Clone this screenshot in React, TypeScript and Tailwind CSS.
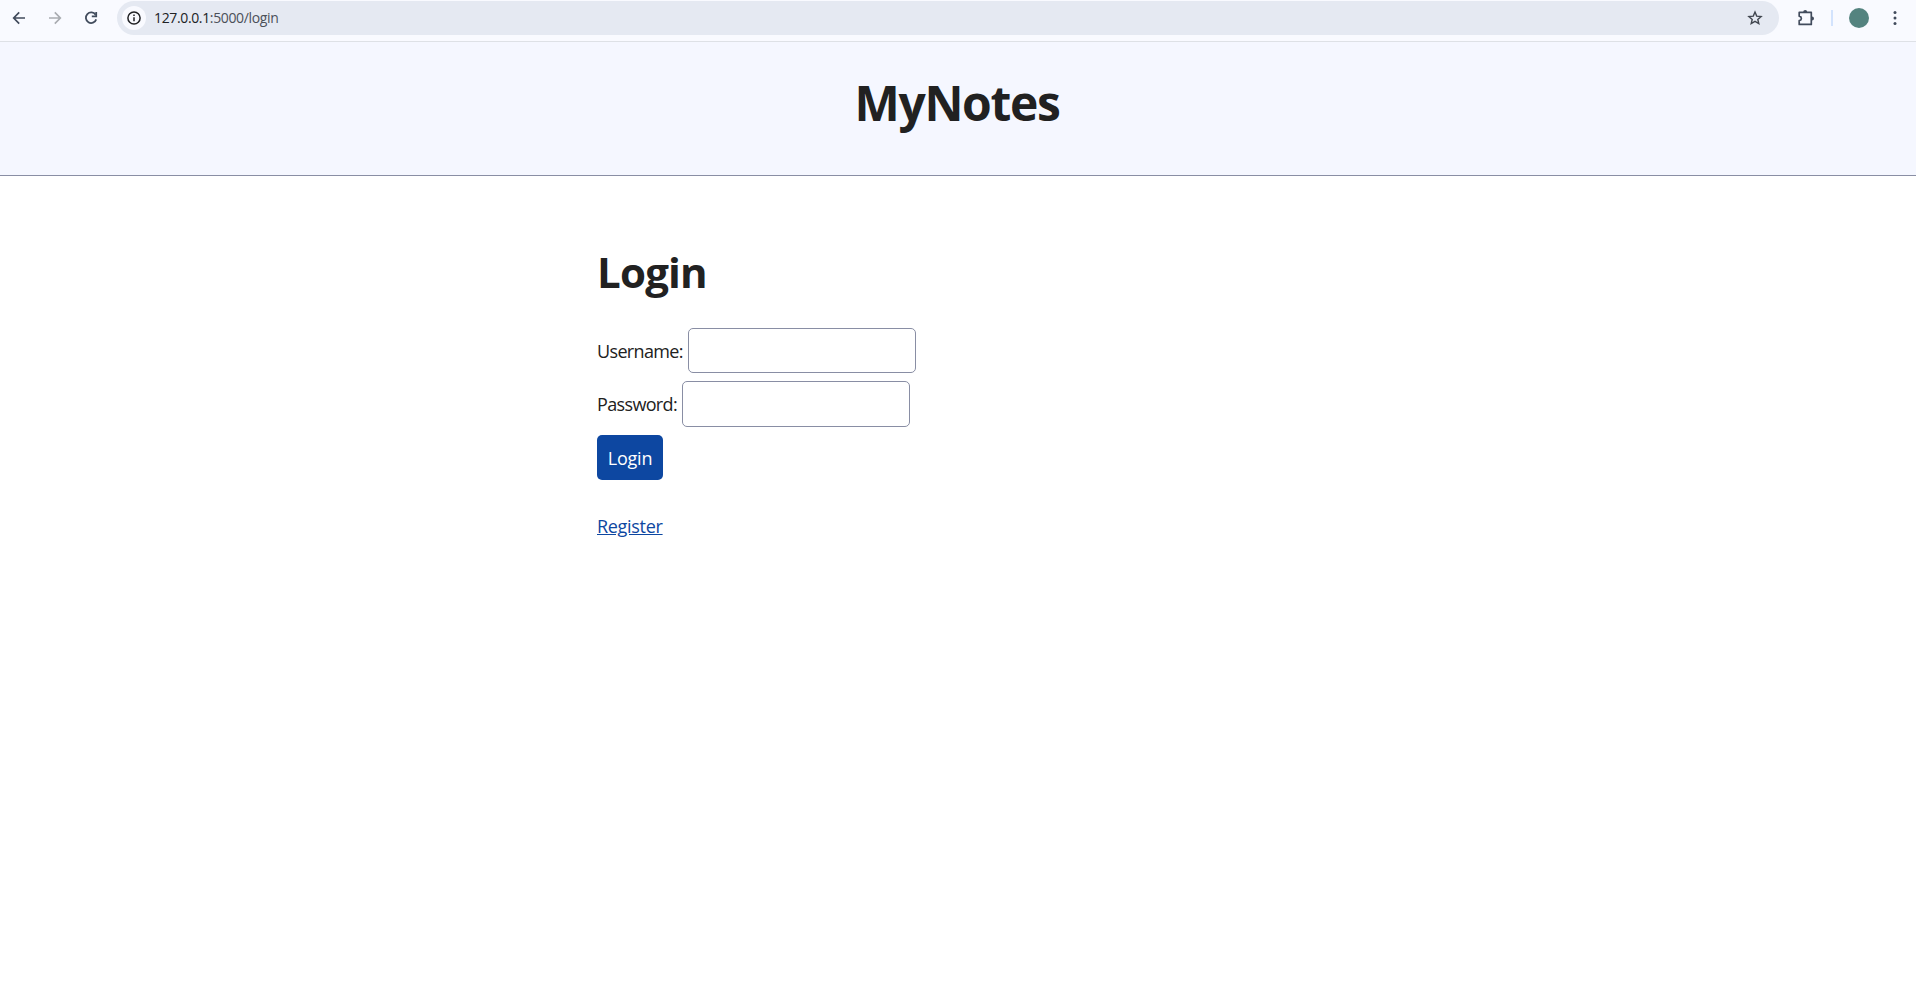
import React from "react";

function Toolbar() {
  return (
    <div className="flex h-[42px] items-start border-b border-[#dee1e6] bg-[#f9faff] pt-px text-[#414b5c]">
      <div className="flex h-[34px] w-[117px] shrink-0 items-center gap-[20px] pl-[11px]">
        <svg className="h-4 w-4" viewBox="0 0 16 16" fill="none" stroke="currentColor" strokeWidth="1.7">
          <path d="M14 8H3M8.2 2.4 2.7 8l5.5 5.6" />
        </svg>
        <svg className="h-4 w-4 text-[#a9acb1]" viewBox="0 0 16 16" fill="none" stroke="currentColor" strokeWidth="1.7">
          <path d="M2 8h11M7.8 2.4 13.3 8l-5.5 5.6" />
        </svg>
        <svg className="h-4 w-4" viewBox="0 0 16 16" fill="none" stroke="currentColor" strokeWidth="1.8">
          <path d="M12.6 4.8A5.3 5.3 0 1 0 13.2 9.4" />
          <path d="M13.2 2v4.4H8.8" />
        </svg>
      </div>
      <div className="flex h-[34px] w-[1662px] shrink-0 items-center rounded-full bg-[#e5e9f2] pl-[5px] pr-[16px]">
        <div className="flex h-6 w-6 items-center justify-center rounded-full bg-[#f9faff] text-[#202124]">
          <svg className="h-4 w-4" viewBox="0 0 16 16" fill="none" stroke="currentColor">
            <circle cx="8" cy="8" r="6.1" strokeWidth="1.5" />
            <path d="M8 7.2v4M8 4.6v1.5" strokeWidth="1.5" />
          </svg>
        </div>
        <span className="ml-[8px] grow font-['Open_Sans','Noto_Sans',sans-serif] text-[14px] leading-[34px] tracking-[-0.36px] text-[#4b5059]">
          <span className="text-[#202124]">127.0.0.1</span>:5000/login
        </span>
        <svg className="h-4 w-4 text-[#41464f]" viewBox="0 0 16 16" fill="none" stroke="currentColor" strokeWidth="1.4">
          <path d="m8 2.1 1.7 4 4.4.4-3.3 2.9 1 4.2L8 11.4l-3.8 2.2 1-4.2-3.3-2.9 4.4-.4z" />
        </svg>
      </div>
      <div className="flex h-[34px] items-center pl-[18px]">
        <svg className="h-[18px] w-[18px]" viewBox="0 0 18 18">
          <path
            d="M2.2 3.4h12.1v12H2.2v-3.7c2.9-.7 2.9-3.8 0-4.5z"
            fill="none"
            stroke="currentColor"
            strokeWidth="1.7"
            strokeLinejoin="round"
          />
          <path d="M6.2 3a2 2 0 0 1 4 0zM15 7.4a2 2 0 0 1 0 4z" fill="currentColor" />
        </svg>
        <div className="ml-[16px] h-4 w-[2px] bg-[#d3e3fd]" />
        <div className="ml-[16px] h-5 w-5 rounded-full bg-[#54837f]" />
        <svg className="ml-[18px] h-4 w-4" viewBox="0 0 16 16" fill="currentColor">
          <circle cx="8" cy="2.6" r="1.5" />
          <circle cx="8" cy="8" r="1.5" />
          <circle cx="8" cy="13.4" r="1.5" />
        </svg>
      </div>
    </div>
  );
}

export default function App() {
  return (
    <div className="min-h-screen bg-white font-['Open_Sans','Noto_Sans',sans-serif] text-[#212121]">
      <Toolbar />
      <header className="flex h-[134px] justify-center border-b border-[#898ea4] bg-[#f5f7ff] pt-[33px] pr-[2px]">
        <h1 className="text-[48px] leading-[55px] font-bold tracking-[-1.35px]">MyNotes</h1>
      </header>
      <main className="mx-auto w-[722px] pt-[71px] text-[18px]">
        <h2 className="text-[42px] leading-[50px] font-bold tracking-[-0.8px]">Login</h2>
        <form className="mt-[31px]" onSubmit={(e) => e.preventDefault()}>
          <div className="flex h-[45px] items-center">
            <label htmlFor="username" className="w-[91px] pt-[1px] tracking-[-0.65px] whitespace-nowrap">Username:</label>
            <input id="username" className="h-[45px] w-[228px] rounded-[5px] border border-[#898ea4] bg-white px-2" />
          </div>
          <div className="mt-2 flex h-[46px] items-center">
            <label htmlFor="password" className="w-[85px] tracking-[-0.65px] whitespace-nowrap">Password:</label>
            <input id="password" type="password" className="h-[46px] w-[228px] rounded-[5px] border border-[#898ea4] bg-white px-2" />
          </div>
          <button className="mt-2 flex h-[45px] w-[66px] items-center justify-center rounded-[5px] bg-[#0d47a1] pt-[1px] tracking-[-0.2px] text-white">Login</button>
        </form>
        <a href="#register" className="mt-[33px] inline-block leading-[27px] tracking-[-0.3px] text-[#0d47a1] underline">Register</a>
      </main>
    </div>
  );
}
